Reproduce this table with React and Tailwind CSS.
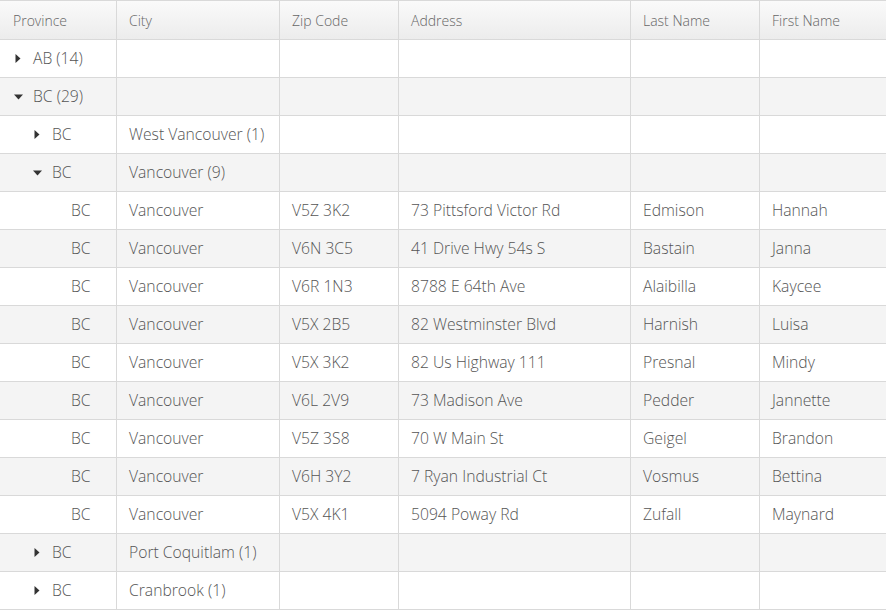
const cols = "grid grid-cols-[117px_163px_119px_232px_129px_126px]";

const headers = ["Province", "City", "Zip Code", "Address", "Last Name", "First Name"];

const rows = [
  { level: 0, open: false, label: "AB (14)" },
  { level: 0, open: true, label: "BC (29)" },
  { level: 1, open: false, label: "BC", city: "West Vancouver (1)" },
  { level: 1, open: true, label: "BC", city: "Vancouver (9)" },
  { data: ["BC", "Vancouver", "V5Z 3K2", "73 Pittsford Victor Rd", "Edmison", "Hannah"] },
  { data: ["BC", "Vancouver", "V6N 3C5", "41 Drive Hwy 54s S", "Bastain", "Janna"] },
  { data: ["BC", "Vancouver", "V6R 1N3", "8788 E 64th Ave", "Alaibilla", "Kaycee"] },
  { data: ["BC", "Vancouver", "V5X 2B5", "82 Westminster Blvd", "Harnish", "Luisa"] },
  { data: ["BC", "Vancouver", "V5X 3K2", "82 Us Highway 111", "Presnal", "Mindy"] },
  { data: ["BC", "Vancouver", "V6L 2V9", "73 Madison Ave", "Pedder", "Jannette"] },
  { data: ["BC", "Vancouver", "V5Z 3S8", "70 W Main St", "Geigel", "Brandon"] },
  { data: ["BC", "Vancouver", "V6H 3Y2", "7 Ryan Industrial Ct", "Vosmus", "Bettina"] },
  { data: ["BC", "Vancouver", "V5X 4K1", "5094 Poway Rd", "Zufall", "Maynard"] },
  { level: 1, open: false, label: "BC", city: "Port Coquitlam (1)" },
  { level: 1, open: false, label: "BC", city: "Cranbrook (1)" },
];

function Arrow({ open }) {
  return open ? (
    <svg width="9" height="6" viewBox="0 0 9 6" className="mr-[10px]">
      <path d="M0 0.5 L9 0.5 L4.5 5.5 Z" fill="#333" />
    </svg>
  ) : (
    <svg width="6" height="9" viewBox="0 0 6 9" className="mr-[12px] ml-[1px]">
      <path d="M0.5 0 L5.5 4.5 L0.5 9 Z" fill="#333" />
    </svg>
  );
}

function Cell({ children, first, last, className = "" }) {
  return (
    <div
      className={`flex items-center h-[37px] ${first ? "pl-[13px]" : "pl-[12px]"} pr-2 whitespace-nowrap overflow-hidden ${
        last ? "" : "border-r border-[#d9d9d9]"
      } ${className}`}
    >
      {children}
    </div>
  );
}

export default function App() {
  return (
    <div
      className="w-[886px] h-[610px] overflow-hidden bg-white text-[15.7px] text-[#555] font-light"
      style={{ fontFamily: '"Open Sans", sans-serif' }}
    >
      {/* Header */}
      <div className={`${cols} h-[40px] border-t border-b border-[#d9d9d9] bg-gradient-to-b from-[#fafafa] to-[#ececec]`}>
        {headers.map((h, i) => (
          <div
            key={h}
            className={`flex items-center h-[38px] ${i === 0 ? "pl-[13px]" : "pl-[12px]"} text-[14px] text-[#666] ${
              i < headers.length - 1 ? "border-r border-[#d9d9d9]" : ""
            }`}
          >
            {h}
          </div>
        ))}
      </div>

      {rows.map((r, idx) => {
        const bg = idx % 2 === 1 ? "bg-[#f4f4f4]" : "bg-white";
        if (r.data) {
          return (
            <div key={idx} className={`${cols} border-b border-[#d9d9d9] ${bg}`}>
              {r.data.map((v, i) => (
                <Cell key={i} first={i === 0} last={i === 5} className={i === 0 ? "pl-[71px]" : ""}>
                  {v}
                </Cell>
              ))}
            </div>
          );
        }
        return (
          <div key={idx} className={`${cols} border-b border-[#d9d9d9] ${bg}`}>
            <Cell className={r.level === 0 ? "pl-[14px]" : "pl-[33px]"}>
              <Arrow open={r.open} />
              <span>{r.label}</span>
            </Cell>
            <Cell>{r.city || ""}</Cell>
            <Cell />
            <Cell />
            <Cell />
            <Cell last />
          </div>
        );
      })}
    </div>
  );
}
